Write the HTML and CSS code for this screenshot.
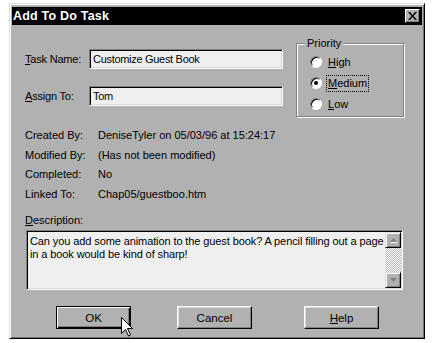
FILE: index.html
```html
<!DOCTYPE html>
<html>
<head>
<meta charset="utf-8">
<link rel="stylesheet" href="styles.css">
</head>
<body>
<div class="window">
  <div class="titlebar">
    <span class="title">Add To Do Task</span>
    <span class="close"><svg width="9" height="8" viewBox="0 0 9 8"><path d="M0 0h2l2.5 3 2.5-3h2l-3.5 4 3.5 4h-2l-2.5-3-2.5 3h-2l3.5-4z" fill="#000"/></svg></span>
  </div>
  <div class="body">
    <div class="top">
      <div class="fields">
        <div class="field-row"><span class="label"><u>T</u>ask Name:</span><div class="input">Customize Guest Book</div></div>
        <div class="field-row second"><span class="label"><u>A</u>ssign To:</span><div class="input">Tom</div></div>
      </div>
      <fieldset class="group">
        <legend>Priority</legend>
        <div class="radio"><span class="circle"></span><span class="rlabel"><u>H</u>igh</span></div>
        <div class="radio"><span class="circle checked"></span><span class="rlabel focus"><u>M</u>edium</span></div>
        <div class="radio"><span class="circle"></span><span class="rlabel"><u>L</u>ow</span></div>
      </fieldset>
    </div>
    <div class="info">
      <span>Created By:</span><span>DeniseTyler on 05/03/96 at 15:24:17</span>
      <span>Modified By:</span><span>(Has not been modified)</span>
      <span>Completed:</span><span>No</span>
      <span>Linked To:</span><span>Chap05/guestboo.htm</span>
    </div>
    <div class="desc-label"><u>D</u>escription:</div>
    <div class="textarea">
      <div class="text">Can you add some animation to the guest book? A pencil filling out a page<br>in a book would be kind of sharp!</div>
      <div class="scrollbar">
        <div class="sbtn"><svg width="7" height="5" viewBox="0 0 7 5"><path d="M3.5 0L7 4H0z" fill="#808080"/><path d="M1 4.5h6" stroke="#fff" stroke-width="1"/></svg></div>
        <div class="track"></div>
        <div class="sbtn"><svg width="7" height="5" viewBox="0 0 7 5"><path d="M0 0h7L3.5 4z" fill="#808080"/></svg></div>
      </div>
    </div>
    <div class="buttons">
      <div class="btn default">OK</div>
      <div class="btn cancel">Cancel</div>
      <div class="btn help"><span><u>H</u>elp</span></div>
    </div>
  </div>
  <svg class="cursor" width="12" height="20" viewBox="0 0 12 20"><path d="M0.5 0.5V16.5L4.5 12.5L7.5 19L9.5 18L6.5 11.5H11.5Z" fill="#fff" stroke="#000" stroke-width="1"/></svg>
</div>
</body>
</html>
```

FILE: styles.css
```css
body {
  margin: 0;
  background: #fff;
  font-family: "Liberation Sans", Arial, sans-serif;
  font-size: 11px;
  color: #000;
}
.window {
  position: relative;
  margin: 3px 0 0 9px;
  width: 416px;
  height: 336px;
  box-sizing: border-box;
  background: #b1b1b1;
  border: 1px solid;
  border-color: #dcdcdc #000 #000 #dcdcdc;
  box-shadow: inset 1px 1px #fff, inset -1px -1px #707070;
  padding: 3px 2px 0 2px;
}
.titlebar {
  height: 18px;
  background: #000;
  color: #fff;
  display: flex;
  align-items: center;
  justify-content: space-between;
  padding: 0 2px 0 1px;
}
.title {
  font-weight: bold;
  font-size: 12.5px;
  letter-spacing: 0.2px;
}
.close {
  width: 15px;
  height: 14px;
  box-sizing: border-box;
  background: #b1b1b1;
  border: 1px solid;
  border-color: #fff #000 #000 #fff;
  box-shadow: inset -1px -1px #808080;
  display: flex;
  align-items: center;
  justify-content: center;
}
.body {
  padding: 11px 0 0 13px;
}
.top {
  display: flex;
  align-items: flex-start;
}
.fields {
  margin-top: 13px;
  width: 258px;
}
.field-row {
  display: flex;
  align-items: center;
}
.field-row.second {
  margin-top: 17px;
}
.label {
  width: 64px;
  white-space: nowrap;
  letter-spacing: -0.2px;
}
.input {
  width: 194px;
  height: 20px;
  box-sizing: border-box;
  background: #efefef;
  border: 1px solid;
  border-color: #808080 #fff #fff #808080;
  box-shadow: inset 1px 1px #000, inset -1px -1px #d8d8d8;
  padding: 0 0 0 3px;
  line-height: 18px;
  letter-spacing: -0.3px;
  white-space: nowrap;
}
.group {
  margin: 0 0 0 13px;
  width: 108px;
  box-sizing: border-box;
  border: 1px solid #808080;
  box-shadow: inset 1px 1px #fff, 1px 1px #fff;
  padding: 2px 0 2px 13px;
}
.group legend {
  padding: 0 2px;
  margin-left: -5px;
  line-height: 14px;
  background: #b1b1b1;
}
.radio {
  height: 20px;
  display: flex;
  align-items: center;
  margin-bottom: 1px;
}
.radio:last-child {
  margin-bottom: 0;
}
.circle {
  width: 12px;
  height: 12px;
  box-sizing: border-box;
  border-radius: 50%;
  background: #fff;
  border: 1px solid;
  border-color: #808080 #fff #fff #808080;
  box-shadow: inset 1px 1px #000;
  display: flex;
  align-items: center;
  justify-content: center;
  margin-right: 4px;
}
.circle.checked::after {
  content: "";
  width: 4px;
  height: 4px;
  border-radius: 50%;
  background: #000;
}
.rlabel {
  padding: 0 1px;
  border: 1px dotted transparent;
  line-height: 15px;
}
.rlabel.focus {
  border-color: #000;
}
.info {
  margin-top: 9px;
  display: grid;
  grid-template-columns: 73px auto;
  line-height: 19.5px;
  white-space: nowrap;
}
.desc-label {
  margin-top: 8px;
  line-height: 16px;
}
.textarea {
  margin: 2px 0 0 1px;
  width: 377px;
  height: 60px;
  box-sizing: border-box;
  background: #efefef;
  border: 1px solid;
  border-color: #808080 #fff #fff #808080;
  box-shadow: inset 1px 1px #000, inset -1px -1px #d8d8d8;
  padding: 1px 1px 1px 2px;
  display: flex;
}
.text {
  flex: 1;
  padding: 3px 0 0 1px;
  line-height: 13px;
  white-space: nowrap;
  letter-spacing: -0.1px;
}
.scrollbar {
  width: 16px;
  display: flex;
  flex-direction: column;
}
.sbtn {
  height: 16px;
  box-sizing: border-box;
  background: #b1b1b1;
  border: 1px solid;
  border-color: #dcdcdc #000 #000 #dcdcdc;
  box-shadow: inset 1px 1px #fff, inset -1px -1px #808080;
  display: flex;
  align-items: center;
  justify-content: center;
}
.track {
  flex: 1;
  background-color: #e8e8e8;
  background-image: conic-gradient(#fff 25%, #b8b8b8 0 50%, #fff 0 75%, #b8b8b8 0);
  background-size: 2px 2px;
}
.buttons {
  margin-top: 16px;
  display: flex;
}
.btn {
  width: 75px;
  height: 23px;
  box-sizing: border-box;
  background: #b1b1b1;
  border: 1px solid;
  border-color: #fff #000 #000 #fff;
  box-shadow: inset -1px -1px #808080, inset 1px 1px #dcdcdc;
  display: flex;
  align-items: center;
  justify-content: center;
  font-size: 11.5px;
}
.btn.default {
  margin-left: 31px;
  border: 1px solid #000;
  box-shadow: inset 1px 1px #fff, inset -1px -1px #000, inset -2px -2px #808080;
}
.btn.cancel {
  margin-left: 46px;
}
.btn.help {
  margin-left: 52px;
}
.cursor {
  position: absolute;
  left: 111px;
  top: 313px;
}
```
